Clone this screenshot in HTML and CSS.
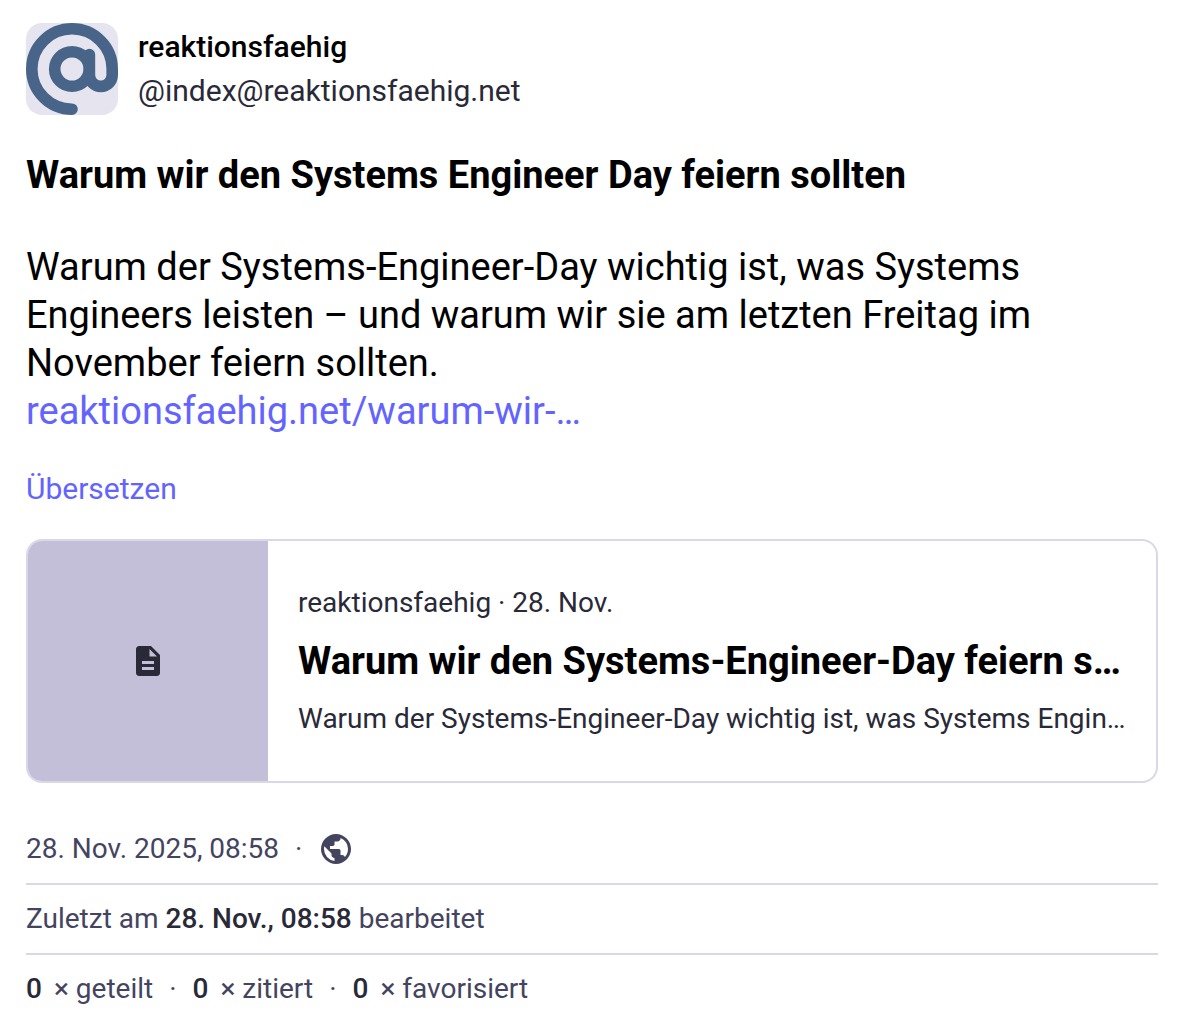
FILE: index.html
```
<!DOCTYPE html>
<html lang="de">
<head>
<meta charset="utf-8">
<meta name="viewport" content="width=device-width, initial-scale=1">
<title>reaktionsfaehig</title>
<link rel="stylesheet" href="styles.css">
</head>
<body>
<article class="status">
  <header class="account">
    <svg class="avatar" viewBox="0 0 92 92" aria-hidden="true">
      <rect width="92" height="92" fill="#e6e4ef"/>
      <g fill="none" stroke="#486589" stroke-width="11.600" stroke-linecap="round">
        <path d="M46 86.200A40.200 40.200 0 1 1 86.200 46V52A11.400 11.400 0 0 1 63.400 52V31.500"/>
        <circle cx="46" cy="46" r="17.300"/>
      </g>
    </svg>
    <div class="names">
      <strong class="display-name">reaktionsfaehig</strong>
      <span class="handle">@index@reaktionsfaehig.net</span>
    </div>
  </header>
  <div class="content">
    <h1 class="title">Warum wir den Systems Engineer Day feiern sollten</h1>
    <p class="text">Warum der Systems-Engineer-Day wichtig ist, was Systems Engineers leisten – und warum wir sie am letzten Freitag im November feiern sollten.<br><a class="link" href="#">reaktionsfaehig.net/warum-wir-…</a></p>
  </div>
  <button class="translate" type="button">Übersetzen</button>
  <a class="card" href="#">
    <span class="card-image">
      <svg class="icon" viewBox="0 -960 960 960" aria-hidden="true"><path d="M320-240h320v-80H320v80Zm0-160h320v-80H320v80ZM240-80q-33 0-56.500-23.500T160-160v-640q0-33 23.500-56.500T240-880h320l240 240v480q0 33-23.500 56.500T720-80H240Zm280-520h200L520-800v200Z"/></svg>
    </span>
    <span class="card-content">
      <span class="card-host">reaktionsfaehig · 28. Nov.</span>
      <strong class="card-title">Warum wir den Systems-Engineer-Day feiern sollten</strong>
      <span class="card-description">Warum der Systems-Engineer-Day wichtig ist, was Systems Engineers leisten</span>
    </span>
  </a>
  <footer class="meta">
    <div class="meta-line date-line">
      <a class="date" href="#">28. Nov. 2025, 08:58</a><span>·</span>
      <svg class="icon globe" viewBox="0 -960 960 960" role="img" aria-label="Öffentlich"><path d="M480-80q-83 0-156-31.500T197-197q-54-54-85.500-127T80-480q0-83 31.500-156T197-763q54-54 127-85.500T480-880q83 0 156 31.500T763-763q54 54 85.500 127T880-480q0 83-31.500 156T763-197q-54 54-127 85.500T480-80Zm-40-82v-78q-33 0-56.500-23.500T360-320v-40L168-552q-3 18-5.500 36t-2.500 36q0 121 79.500 212T440-162Zm276-102q20-22 36-47.500t26.500-53q10.500-27.500 16-56.500t5.500-59q0-98-54.500-179T600-776v16q0 33-23.500 56.500T520-680h-80v80q0 17-11.500 28.500T400-560h-80v80h240q17 0 28.500 11.500T600-440v120h40q26 0 47 15.500t29 40.500Z"/></svg>
    </div>
    <div class="meta-line">Zuletzt am <strong>28. Nov., 08:58</strong> bearbeitet</div>
    <div class="meta-line counts">
      <a class="count" href="#"><strong>0</strong> <span>× geteilt</span></a><span>·</span>
      <a class="count" href="#"><strong>0</strong> <span>× zitiert</span></a><span>·</span>
      <a class="count" href="#"><strong>0</strong> <span>× favorisiert</span></a>
    </div>
  </footer>
</article>
</body>
</html>
```
FILE: styles.css
```
* {
  box-sizing: border-box;
}

body {
  margin: 0;
  background: #fff;
  color: #000;
  font-family: Roboto, sans-serif;
}

a {
  color: inherit;
  text-decoration: none;
}

.status {
  padding: 23px 26px 8px;
}

.account {
  display: flex;
  gap: 20px;
  margin-bottom: 36px;
}

.avatar {
  width: 92px;
  height: 92px;
  border-radius: 16px;
}

.names {
  display: flex;
  flex-direction: column;
  padding-top: 2px;
  font-size: 30px;
  line-height: 44px;
}

.display-name {
  font-weight: 500;
}

.handle {
  color: #292938;
}

.content {
  font-size: 38px;
  line-height: 48px;
}

.title {
  margin: 0 0 44px;
  font-size: inherit;
  font-weight: 700;
}

.text {
  margin: 0;
}

.link,
.translate {
  color: #6364ff;
}

.translate {
  display: block;
  margin: 32px 0 28px;
  padding: 0;
  border: 0;
  background: none;
  font: inherit;
  font-size: 30px;
  line-height: 44px;
}

.card {
  display: flex;
  overflow: hidden;
  border: 2px solid #d9d7e8;
  border-radius: 16px;
  color: #292938;
}

.card-image {
  display: flex;
  flex: none;
  align-items: center;
  justify-content: center;
  width: 240px;
  height: 240px;
  background: #c4bfd9;
}

.icon {
  width: 36px;
  height: 36px;
  fill: currentColor;
}

.card-content {
  display: flex;
  flex: 1;
  flex-direction: column;
  justify-content: center;
  gap: 8px;
  min-width: 0;
  padding: 0 30px;
  font-size: 28px;
  line-height: 42px;
}

.card-content > * {
  overflow: hidden;
  text-overflow: ellipsis;
  white-space: nowrap;
}

.card-title {
  color: #000;
  font-size: 38px;
  line-height: 58px;
}

.meta {
  margin-top: 32px;
  color: #444460;
  font-size: 28px;
  line-height: 36px;
}

.meta-line {
  padding: 16px 0;
}

.meta-line + .meta-line {
  border-top: 2px solid #d9d7e8;
}

.meta strong {
  color: #292938;
  font-weight: 500;
}

.date-line,
.counts {
  display: flex;
  align-items: center;
  gap: 16px;
}

.count {
  display: flex;
  gap: 12px;
}
```
